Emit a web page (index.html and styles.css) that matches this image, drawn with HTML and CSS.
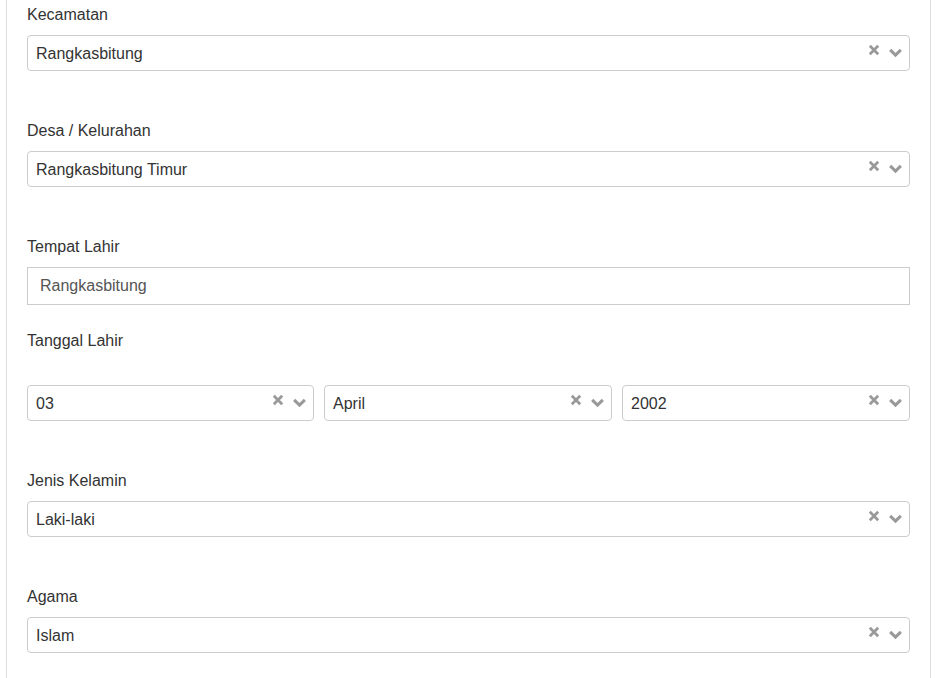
FILE: index.html
```html
<!DOCTYPE html>
<html lang="id">
<head>
<meta charset="utf-8">
<title>Form</title>
<link rel="stylesheet" href="styles.css">
</head>
<body>
<div class="card">
  <div class="group">
    <div class="label">Kecamatan</div>
    <div class="select"><span class="value">Rangkasbitung</span><span class="icons"><svg class="clear" viewBox="0 0 10 10"><path d="M1.5 1.5L8.5 8.5M8.5 1.5L1.5 8.5"/></svg><svg class="chev" viewBox="0 0 14 10"><path d="M2 2.5L7 7.5L12 2.5"/></svg></span></div>
  </div>
  <div class="group">
    <div class="label">Desa / Kelurahan</div>
    <div class="select"><span class="value">Rangkasbitung Timur</span><span class="icons"><svg class="clear" viewBox="0 0 10 10"><path d="M1.5 1.5L8.5 8.5M8.5 1.5L1.5 8.5"/></svg><svg class="chev" viewBox="0 0 14 10"><path d="M2 2.5L7 7.5L12 2.5"/></svg></span></div>
  </div>
  <div class="group group-tight">
    <div class="label">Tempat Lahir</div>
    <div class="input">Rangkasbitung</div>
  </div>
  <div class="group">
    <div class="label">Tanggal Lahir</div>
    <div class="date-row">
      <div class="select"><span class="value">03</span><span class="icons"><svg class="clear" viewBox="0 0 10 10"><path d="M1.5 1.5L8.5 8.5M8.5 1.5L1.5 8.5"/></svg><svg class="chev" viewBox="0 0 14 10"><path d="M2 2.5L7 7.5L12 2.5"/></svg></span></div>
      <div class="select"><span class="value">April</span><span class="icons"><svg class="clear" viewBox="0 0 10 10"><path d="M1.5 1.5L8.5 8.5M8.5 1.5L1.5 8.5"/></svg><svg class="chev" viewBox="0 0 14 10"><path d="M2 2.5L7 7.5L12 2.5"/></svg></span></div>
      <div class="select"><span class="value">2002</span><span class="icons"><svg class="clear" viewBox="0 0 10 10"><path d="M1.5 1.5L8.5 8.5M8.5 1.5L1.5 8.5"/></svg><svg class="chev" viewBox="0 0 14 10"><path d="M2 2.5L7 7.5L12 2.5"/></svg></span></div>
    </div>
  </div>
  <div class="group">
    <div class="label">Jenis Kelamin</div>
    <div class="select"><span class="value">Laki-laki</span><span class="icons"><svg class="clear" viewBox="0 0 10 10"><path d="M1.5 1.5L8.5 8.5M8.5 1.5L1.5 8.5"/></svg><svg class="chev" viewBox="0 0 14 10"><path d="M2 2.5L7 7.5L12 2.5"/></svg></span></div>
  </div>
  <div class="group">
    <div class="label">Agama</div>
    <div class="select"><span class="value">Islam</span><span class="icons"><svg class="clear" viewBox="0 0 10 10"><path d="M1.5 1.5L8.5 8.5M8.5 1.5L1.5 8.5"/></svg><svg class="chev" viewBox="0 0 14 10"><path d="M2 2.5L7 7.5L12 2.5"/></svg></span></div>
  </div>
</div>
</body>
</html>
```

FILE: styles.css
```css
html, body {
  margin: 0;
  padding: 0;
  background: #fff;
}
body {
  font-family: "Liberation Sans", Arial, sans-serif;
  font-size: 16px;
  color: #333;
}
.card {
  margin-left: 6px;
  width: 883px;
  min-height: 678px;
  box-sizing: content-box;
  border-left: 1px solid #ddd;
  border-right: 1px solid #ddd;
  padding: 3px 20px 0 20px;
}
.group {
  margin-bottom: 48px;
}
.group-tight {
  margin-bottom: 24px;
}
.label {
  line-height: 24px;
  height: 24px;
  margin-bottom: 8px;
}
.select {
  height: 36px;
  box-sizing: border-box;
  border: 1px solid #ccc;
  border-radius: 4px;
  display: flex;
  align-items: center;
  padding-left: 8px;
  padding-right: 6px;
  background: #fff;
}
.value {
  flex: 1;
  line-height: 20px;
  padding-top: 2px;
}
.icons {
  display: flex;
  align-items: center;
  gap: 8px;
  margin-top: -2px;
}
.clear {
  width: 12px;
  height: 12px;
  margin-top: -5px;
  fill: none;
  stroke: #999;
  stroke-width: 2.3;
}
.chev {
  width: 15px;
  height: 11px;
  fill: none;
  stroke: #999;
  stroke-width: 2.8;
}
.input {
  height: 38px;
  box-sizing: border-box;
  border: 1px solid #ccc;
  padding: 0 12px;
  line-height: 36px;
  color: #555;
}
.date-row {
  display: grid;
  grid-template-columns: 287px 288px 288px;
  gap: 10px;
  margin-top: 32px;
}
```
